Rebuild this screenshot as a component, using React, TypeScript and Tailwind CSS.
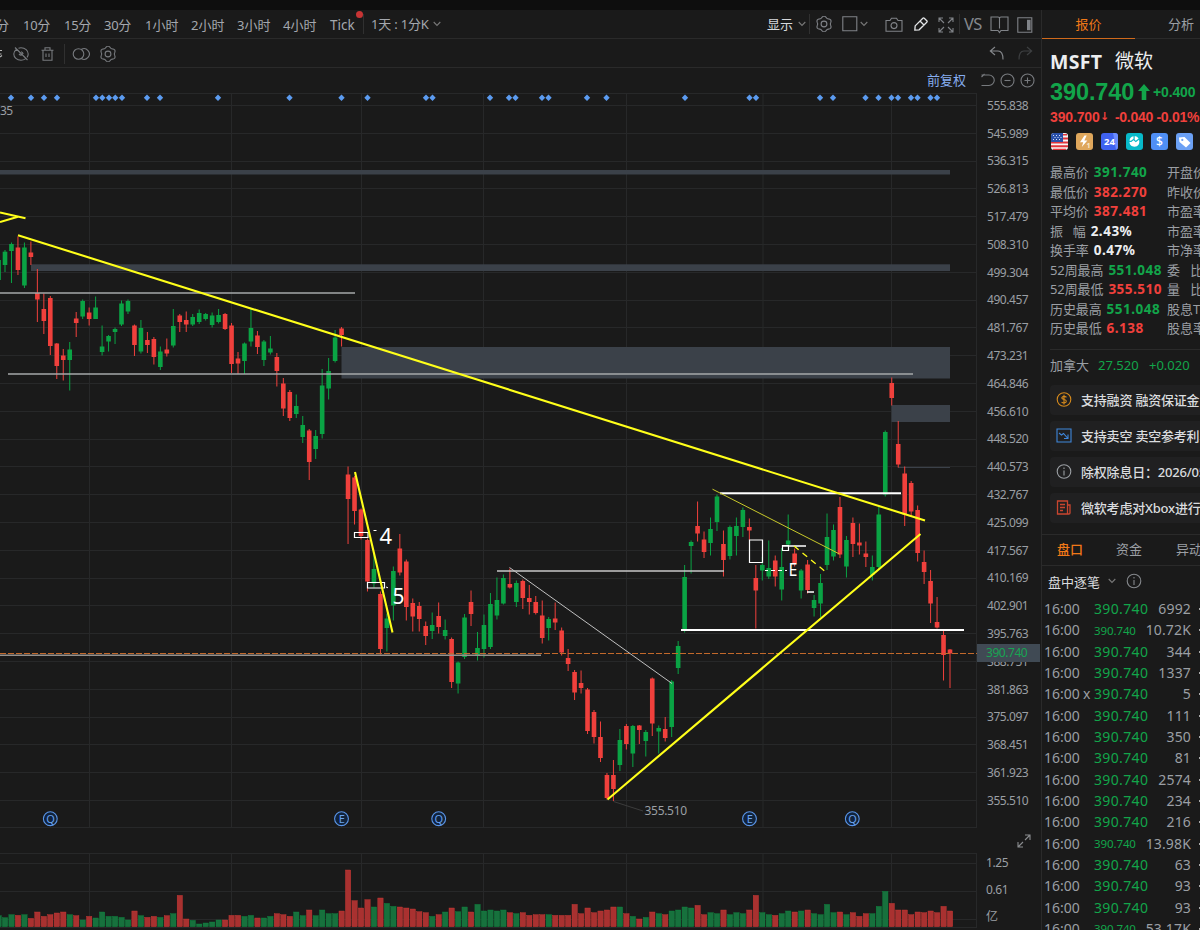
import React from "react";

type Candle = [0 | 1, number, number, number, number, number];

// [rising, body top, body bottom, high, low, volume height]
const CANDLES: Candle[] = [
  [1, 260, 280, 260, 280, 11], [1, 251.7, 265, 250, 272, 9], [1, 244, 251, 242.5, 283, 12], [0, 247.5, 270, 236.5, 275, 11.3],
  [1, 247.5, 285.5, 242.5, 288, 12], [0, 252.5, 257, 241.5, 265, 8.3], [0, 293, 299.5, 269, 322, 14.7], [0, 309, 321, 293.5, 334, 10.3],
  [0, 298, 346, 296, 355, 12], [0, 343.5, 366, 343, 379, 13.7], [0, 355.5, 360, 349, 380.5, 14.7], [1, 349.5, 360, 342, 390.5, 12],
  [0, 318.5, 323, 312, 337, 11], [1, 301, 316.5, 299.5, 319, 6.7], [0, 312.5, 319, 307.5, 325.5, 10.3], [1, 307.5, 319, 296.5, 319, 8.7],
  [1, 346.5, 352, 325.5, 355.5, 14.7], [1, 336, 341.5, 335, 351.5, 10.3], [1, 329, 332, 327.5, 344, 10.3], [1, 303.5, 324.5, 300.5, 326, 9.3],
  [1, 301, 311.5, 299.5, 314, 6.7], [0, 325.5, 345, 324.5, 356, 15.7], [1, 328, 351.5, 320, 353.5, 11], [0, 340, 345, 332, 353, 9.3],
  [0, 339, 357, 337, 364.5, 10.3], [1, 351.5, 367, 346.5, 370, 9.3], [0, 349.5, 353.5, 338.5, 356.5, 11], [1, 326, 345.5, 309, 347.5, 13],
  [0, 315.5, 322, 314, 332, 31.3], [0, 320, 324.5, 311.5, 332, 7.7], [1, 317, 324.5, 314, 326, 6.3], [1, 313, 322, 309.5, 324, 2.7],
  [1, 314, 319, 313, 320.5, 3.7], [1, 315.5, 325, 312.5, 327.5, 4.7], [1, 315, 322, 309, 323.5, 6.7], [0, 314, 329, 313, 330, 6.7],
  [0, 325.5, 364, 323, 373, 11.3], [0, 358.5, 363.5, 352, 374, 11.3], [1, 343.5, 361, 342.5, 374, 10.3], [1, 328, 341.5, 309, 346.5, 11.3],
  [0, 335.5, 347, 331, 354, 8.7], [1, 341.5, 360, 340, 366, 8.7], [1, 348.5, 352.5, 336, 354.5, 10.3], [0, 357, 371, 353, 386.5, 13],
  [0, 383.5, 408.5, 378, 416, 12], [0, 392, 418, 390, 421, 10.3], [1, 406, 414, 394.5, 418, 14.7], [1, 425, 437, 416, 443, 11],
  [0, 430.5, 462, 429, 480, 16.7], [1, 436, 449, 430, 459, 11], [1, 385.5, 434, 369, 438.5, 16.7], [1, 371, 388.5, 358, 399.5, 13],
  [1, 337.5, 361, 330, 362.5, 13], [0, 328.5, 335, 327, 346.5, 15.7], [0, 474.5, 499, 466.5, 544, 56.7], [0, 477.5, 511, 476, 524.5, 26],
  [0, 509.5, 536, 508.5, 539.5, 18.7], [0, 540, 581.5, 538.5, 591.5, 27], [1, 569, 583.5, 553.5, 587.5, 19.7], [0, 594, 649, 591.5, 654.5, 28.7],
  [1, 618.5, 628, 613.5, 651.5, 23.3], [1, 571, 605.5, 566.5, 620.5, 20.3], [0, 548.5, 572.5, 534, 575.5, 19.7], [0, 561.5, 607, 559.5, 620.5, 18.7],
  [0, 603, 616.5, 598.5, 631.5, 17.7], [0, 606, 619, 602, 631.5, 15], [0, 626, 636, 621.5, 645, 14], [1, 625, 631, 612.5, 639, 10.3],
  [0, 616, 627, 602.5, 633.5, 12], [1, 630, 636, 619.5, 639.5, 14.7], [0, 639, 682, 637.5, 688, 18.7], [1, 662.5, 683.5, 661.5, 693.5, 15],
  [1, 617.5, 657, 614, 659, 19.7], [0, 602, 614, 590.5, 626, 14.7], [1, 648, 656, 632, 660.5, 22.3], [1, 625, 649, 614.5, 657.5, 15.7],
  [1, 604, 647, 593, 649, 16.7], [1, 600, 615.5, 577.5, 619.5, 15.7], [1, 578, 603.5, 574.5, 604.5, 16.7], [0, 584, 587.5, 568.5, 588.5, 14],
  [1, 583, 602, 580.5, 607, 13], [0, 581, 598, 579.5, 609, 14], [0, 598, 602, 585, 614.5, 11.3], [0, 602, 613, 596, 614.5, 12],
  [0, 615.5, 638, 600.5, 643.5, 12], [1, 619, 628, 617, 640.5, 12], [0, 618.5, 622.5, 602.5, 630, 11.3], [0, 630.5, 652.5, 627.5, 655.5, 11.3],
  [0, 658, 664, 649, 671, 11.3], [0, 672, 692.5, 670, 700, 22.3], [0, 683, 688, 670.5, 693.5, 13], [0, 689.5, 731, 688, 734, 18.7],
  [0, 712, 737, 710, 743.5, 14], [0, 737, 758, 721.5, 762, 15.7], [0, 775, 798, 773, 799.5, 16.7], [0, 775, 789, 760, 801, 19.7],
  [1, 740, 765, 729, 771, 19.7], [0, 726, 744, 724, 749.5, 13], [1, 726, 753.5, 725, 767, 10.3], [0, 725.5, 730, 725, 744, 7.7],
  [1, 732, 741, 730, 756.5, 9.3], [0, 678.5, 723.5, 677.5, 736, 14.7], [1, 728, 731.5, 725.5, 753.5, 13], [0, 729, 738, 717, 741.5, 12],
  [1, 681.5, 727, 680, 737, 15.7], [1, 646, 668, 641, 674, 16.7], [1, 577, 630, 565, 632.5, 19.7], [1, 542, 546, 540.5, 573.5, 18.7],
  [0, 526, 533.5, 501.5, 541.5, 21.3], [0, 539.5, 552, 531.5, 558, 12], [1, 529, 543, 517.5, 555.5, 14], [1, 496.5, 522, 494.5, 531, 13],
  [0, 544, 560, 530.5, 576.5, 16.7], [1, 527, 556, 525.5, 559.5, 12], [1, 526, 536, 517.5, 555.5, 14], [1, 510, 527, 507.5, 537, 13],
  [0, 527, 530.5, 518.5, 540, 16.7], [0, 578, 590.5, 565, 628.5, 31.3], [1, 565, 570.5, 557, 580.5, 14], [1, 568, 576.5, 540.5, 579, 12],
  [0, 560.5, 576.5, 555.5, 586.5, 11.3], [1, 567, 589.5, 548, 600.5, 13], [1, 540.5, 544.5, 514.5, 545, 15.7], [0, 553.5, 563.5, 548.5, 566.5, 14.7],
  [1, 570.5, 590.5, 569, 598.5, 15.7], [0, 564.5, 590, 560, 593.5, 16.7], [1, 600, 608, 595, 616.5, 13], [1, 583, 603.5, 574, 617, 12],
  [1, 537, 565, 513.5, 570, 22.3], [1, 530, 556.5, 524.5, 560.5, 14], [0, 507, 554.5, 497, 558, 14.7], [1, 540, 566.5, 536, 577.5, 12],
  [0, 523, 544, 517.5, 557, 14], [0, 542.5, 545.5, 523.5, 554.5, 10.3], [0, 553.5, 557, 541.5, 567, 13], [1, 567, 575, 555.5, 580.5, 13],
  [1, 514.5, 567, 507, 569.5, 20.3], [1, 432, 494.5, 430.5, 496.5, 35.3], [0, 383, 398, 377.5, 405.5, 23.3], [0, 444, 464.5, 421, 467.5, 16.7],
  [0, 473.5, 514.5, 466.5, 526, 16.7], [0, 483, 511.5, 481, 516.5, 12], [0, 510, 553, 505.5, 561.5, 14.7], [0, 562, 572, 550.5, 584, 14],
  [0, 581, 603.5, 570, 623, 15.7], [0, 622, 627.5, 597, 628.5, 14], [0, 635, 655, 630.5, 680.5, 20.3], [0, 649.5, 653.5, 649, 688, 15.7],
];

const candleX = (i: number) => 5 + 6.4726 * (i - 1);

const GRID_X = [89.5, 231.5, 361.5, 483.5, 626.5, 763, 891.5];
const PRICES = [
  "555.838", "545.989", "536.315", "526.813", "517.479", "508.310", "499.304", "490.457", "481.767", "473.231", "464.846", "456.610", "448.520",
  "440.573", "432.767", "425.099", "417.567", "410.169", "402.901", "395.763", "388.751", "381.863", "375.097", "368.451", "361.923", "355.510",
];
const EVENTS = [
  11, 31, 44, 57, 96, 102.3, 109, 115.3, 122, 147, 160, 218, 289.5, 341.5, 367.5, 426, 432.5, 490, 509, 515.5, 542, 548.5, 587, 606.5, 685,
  749.5, 756, 820, 833, 865.5, 878.5, 891.5, 898, 911, 917.5, 930.5, 937,
];
const BADGES: [number, string][] = [[50.3, "Q"], [341.5, "E"], [438.7, "Q"], [749.5, "E"], [852.3, "Q"]];

const GEAR =
  Array.from({ length: 72 }, (_, k) => {
    const a = (k * Math.PI) / 36;
    const r = 7.1 - 0.75 * Math.cos(6 * a);
    return `${k ? "L" : "M"}${(8 + r * Math.cos(a)).toFixed(2)} ${(8 + r * Math.sin(a)).toFixed(2)}`;
  }).join("") + "Z";

function Icon({ children, className = "", w = 16, h = 16 }: { children: React.ReactNode; className?: string; w?: number; h?: number }) {
  return (
    <svg width={w} height={h} viewBox={`0 0 ${w} ${h}`} fill="none" stroke="currentColor" strokeWidth={1.1} className={`shrink-0 ${className}`}>
      {children}
    </svg>
  );
}

const Gear = ({ className = "" }) => (
  <Icon className={className}>
    <path d={GEAR} />
    <circle cx="8" cy="8" r="2.9" />
  </Icon>
);

const Chevron = ({ className = "" }) => (
  <Icon w={8} h={6} className={className}>
    <path d="M.7 1 4 4.4 7.3 1" />
  </Icon>
);

const Divider = ({ className = "" }) => <div className={`w-px shrink-0 bg-[#303030] ${className}`} />;

function TopToolbar() {
  return (
    <div className="flex h-[29px] items-center border-b border-[#2a2a2a] text-[13px] whitespace-nowrap text-[#a4a8ae]">
      <div className="flex shrink-0 items-center pt-[3px]">
        <span className="-ml-[4px] w-[27px] shrink-0">分</span>
        <span className="w-[41px] shrink-0 tracking-[-0.3px]">10分</span>
        <span className="w-[40px] shrink-0 tracking-[-0.3px]">15分</span>
        <span className="w-[41px] shrink-0 tracking-[-0.3px]">30分</span>
        <span className="w-[46px] shrink-0">1小时</span>
        <span className="w-[46px] shrink-0">2小时</span>
        <span className="w-[46px] shrink-0">3小时</span>
        <span className="w-[47px] shrink-0">4小时</span>
        <span className="relative w-[33px] shrink-0 text-[13.5px]">
          Tick
          <i className="absolute -top-[8px] left-[26px] size-[7px] rounded-full bg-[#c73434]" />
        </span>
      </div>
      <Divider className="h-[20px]" />
      <span className="ml-[7px] w-[62px] shrink-0 tracking-[-0.2px]">1天 : 1分K</span>
      <Chevron className="text-[#777]" />
      <span className="mt-px ml-[326px] w-[31px] shrink-0 text-[#d6d9dc]">显示</span>
      <Chevron className="text-[#777]" />
      <Divider className="ml-[3px] h-[20px]" />
      <Gear className="ml-[6px] text-[#808388]" />
      <Icon className="ml-[10px] text-[#808388]">
        <path d="M.8 .8h14v14h-14z" />
      </Icon>
      <Chevron className="ml-[2px] text-[#777]" />
      <Icon w={18} className="mt-[2px] ml-[17px] text-[#808388]">
        <path d="M1 3.5h4l1.5-2.3h5L13 3.5h4v10.7H1z" />
        <circle cx="9" cy="8.6" r="3" />
      </Icon>
      <Icon className="mt-[2px] ml-[9px] text-[#e4e6e8]">
        <g strokeWidth="1.3" transform="rotate(45 8 8)">
          <path d="M5.2 12V1.2Q5.2.2 6.2.2h3.600q1 0 1 1V12L8 15.300z M5.200 5.200h5.600" />
        </g>
      </Icon>
      <Icon className="mt-[2px] ml-[10px] text-[#808388]">
        <path d="M1 5V1h4M1 1l5 5M11 1h4v4M15 1l-5 5M1 11v4h4M1 15l5-5M15 11v4h-4M15 15l-5-5" />
      </Icon>
      <Divider className="ml-[5px] h-[20px]" />
      <span className="mt-px ml-[4px] w-[26px] shrink-0 text-[16.5px] tracking-[-0.6px] text-[#85888d]">VS</span>
      <Icon w={19} h={18} className="mt-[2px] text-[#808388]">
        <path d="M1 1h7q1.500 0 1.500 1.500Q9.500 1 11 1h7v13.500h-7L9.500 16.500 8 14.500H1zM9.500 2.500v10" />
      </Icon>
      <Icon className="mt-[2px] ml-[8px] text-[#808388]">
        <path d="M.8 .8h14v14.400h-14z" />
        <path d="M10 2.800h3.600v10.400H10z" fill="currentColor" stroke="none" />
      </Icon>
    </div>
  );
}

function DrawToolbar() {
  return (
    <div className="flex h-[29px] items-center border-b border-[#2a2a2a] pt-px text-[#777a7e]">
      <Icon w={4} h={12} className="text-[#b5b5b5]">
        <path d="M0 2.500h2M0 6h1.500M0 9l2-1.500" />
      </Icon>
      <Icon className="ml-[9px]">
        <path d="M3.600 3.200C1.700 4.600.8 6.500.8 8c0 3.200 3 6.200 7.200 6.200 1.700 0 3.200-.5 4.400-1.300M5.500 2.200C6.300 1.900 7.100 1.800 8 1.800c4.200 0 7.200 3 7.200 6.200 0 1.200-.4 2.400-1.200 3.400M2 1.500l12.500 12.500M6 7.800q2.200 2.800 4-.3Q9.500 6 8 5.700" />
      </Icon>
      <Icon w={13} h={14} className="ml-[12px]">
        <path d="M.5 3.300h12M2 3.500v9.700h9V3.500M4 3.200V.8h5v2.400M5 6.500v3.500M8 6.500v3.500" />
      </Icon>
      <Divider className="ml-[10px] h-[20px]" />
      <Icon w={18} h={14} className="ml-[7px]">
        <circle cx="6.500" cy="7" r="5.300" />
        <path d="M9.200 2.500A5.300 5.300 0 1 1 9.200 11.500" />
      </Icon>
      <Gear className="ml-[10px]" />
      <Icon className="ml-auto text-[#85888c]">
        <path d="M6 1 1.300 5 6 9M1.500 5H9q5 0 5 8.500" />
      </Icon>
      <Icon className="mr-[8px] ml-[12px] text-[#3e4042]">
        <path d="M10 1l4.700 4L10 9M14.500 5H7q-5 0-5 8.500" />
      </Icon>
    </div>
  );
}

function ChartHeader() {
  return (
    <div className="flex h-[24px] items-center justify-end pr-[6px] text-[#777a7e]">
      <span className="mr-[14px] text-[13px] text-[#86adf0]">前复权</span>
      <Icon w={15} h={14}>
        <path d="M4.500 1 1.500 4M1.500 2h7.500a5 5 0 0 1 0 10.500H1.500" />
      </Icon>
      <Icon w={15} h={15} className="ml-[5px]">
        <circle cx="7.500" cy="7.500" r="6.500" />
        <path d="M4.500 7.500h6" />
      </Icon>
      <Icon w={15} h={15} className="ml-[5px]">
        <circle cx="7.500" cy="7.500" r="6.500" />
        <path d="M4.500 7.500h6M7.500 4.500v6" />
      </Icon>
    </div>
  );
}

function PriceChart() {
  return (
    <svg width={977} height={748} viewBox="0 92 977 748" className="shrink-0">
      <g stroke="#272829" strokeWidth="1">
        <path d="M0 93.500H977M0 827.500H977M976.500 93V827" />
        {PRICES.map((p, i) => (
          <path key={p} d={`M0 ${Math.round(105 + i * 27.8) + 0.5}H977`} />
        ))}
        {GRID_X.map((x) => (
          <path key={x} d={`M${x} 94V827`} />
        ))}
      </g>
      <g fill="#3b4149">
        <rect x="0" y="170" width="950" height="4.500" />
        <rect x="31" y="264.300" width="919" height="6.700" />
        <rect x="341.500" y="347" width="608.500" height="31.500" />
        <rect x="891.500" y="405" width="58.500" height="17" />
        <rect x="898" y="467" width="52" height="1" />
      </g>
      <g fill="#5b9bf0">
        {EVENTS.map((x) => (
          <path key={x} d={`M${x} 94.500l3.200 3.200-3.200 3.200-3.200-3.200z`} />
        ))}
      </g>
      {CANDLES.map(([up, top, bottom, high, low], i) => {
        const x = candleX(i);
        return (
          <g key={i} fill={up ? "#0aa344" : "#f0403c"}>
            <rect x={x - 0.5} y={high} width="1" height={low - high} />
            <rect x={x - 2.3} y={top} width="4.600" height={bottom - top} />
          </g>
        );
      })}
      <path d="M0 653.500H977" stroke="#c2692b" strokeDasharray="6 2" strokeWidth="1" />
      <g stroke="#a6a8aa" strokeWidth="1.700" fill="none">
        <path d="M0 293H355" />
        <path d="M8 374H913" />
        <path d="M0 655.200H541" strokeWidth="1.400" stroke="#96928e" />
        <path d="M497 571H724" strokeWidth="1.300" stroke="#c8c8c8" />
        <path d="M509.500 567.500 672 683.500" strokeWidth="1" stroke="#c0c0c0" />
      </g>
      <g stroke="#fff" strokeWidth="2" fill="none">
        <path d="M720 493.300H901M681 630H964" />
        <path d="M782 546H806M807 592H814" strokeWidth="1.600" />
        <path d="M354.500 532.500h13.500v5h-13.500zM367.500 582.500h17v5.500h-17zM749.500 540h13v22.500h-13zM782.500 545.500h6v5h-6z" strokeWidth="1.200" />
        <path d="M373.500 530.500h3M386 587l2 .8M765 570.500h3M771 570.500h4M778 570.500h4M785 570.500h2" strokeWidth="1" />
      </g>
      <g stroke="#ffff1a" fill="none" strokeWidth="2.100">
        <path d="M18 235.200 925 520.500M607.500 799.500 920.500 534M355 472l37.500 160.500" />
        <path d="M0 212.500 25.500 218.200M0 222 18 216.800" />
        <path d="M712.500 489.200 839.500 554" strokeWidth="1" stroke="#c9c92a" />
        <path d="M794 546 826.500 572.500" strokeWidth="1.300" strokeDasharray="6 5" />
      </g>
      <path d="M613.500 801.500 643 811" stroke="#3c3c3c" strokeWidth="1" />
      <g fill="#fff">
        <text x="379.500" y="544" fontSize="22">4</text>
        <text x="392.500" y="603.500" fontSize="21">5</text>
        <text x="788.500" y="575.700" fontSize="18" textLength="8.500" lengthAdjust="spacingAndGlyphs">E</text>
      </g>
      <g fill="#9b9fa4" fontSize="12">
        <text x="644.500" y="815" letterSpacing="-0.300">355.510</text>
        <text x="0" y="115" letterSpacing="-0.500">35</text>
      </g>
      {BADGES.map(([x, t]) => (
        <g key={x}>
          <circle cx={x} cy="818.700" r="6.900" fill="#10233c" stroke="#5a95e8" strokeWidth="1.100" />
          <text x={x} y="822.700" fontSize="11" fill="#6aa2ee" textAnchor="middle">{t}</text>
        </g>
      ))}
    </svg>
  );
}

function VolumeChart() {
  return (
    <svg width={977} height={90} viewBox="0 840 977 90" className="shrink-0">
      <path
        stroke="#272829"
        d={"M0 853.500H977M0 863.500H977M0 891.500H977M0 919.500H977M0 927.500H977M976.500 854V927" + GRID_X.map((x) => `M${x} 854V927`).join("")}
      />
      {CANDLES.map(([up, , , , , v], i) => (
        <rect key={i} x={candleX(i) - 2.6} y={926.7 - v} width="5.300" height={v} fill={up ? "#17713d" : "#a93130"} stroke={up ? "#0b8a40" : "#cf3a36"} strokeWidth=".4" />
      ))}
    </svg>
  );
}

function ChartPane() {
  return (
    <main className="flex w-[1041px] shrink-0 flex-col">
      <TopToolbar />
      <DrawToolbar />
      <ChartHeader />
      <div className="flex h-[748px] text-[12px] tracking-[-0.45px] text-[#9b9fa4]">
        <PriceChart />
        <div className="relative w-[64px] shrink-0">
          {PRICES.map((p) => (
            <div key={p} className="flex h-[27.8px] items-center pl-[10px]">{p}</div>
          ))}
          <div className="absolute top-[552px] left-0 flex h-[18px] w-[63px] items-center bg-[#404a54] pl-[9px] text-[#18a453]">390.740</div>
          <Icon w={14} h={14} className="absolute top-[742px] left-[40px] text-[#8b8d90]">
            <path d="M8 1h5v5M13 1 8 6M1 8v5h5M1 13l5-5" />
          </Icon>
        </div>
      </div>
      <div className="flex h-[90px] text-[12px] tracking-[-0.4px] text-[#9b9fa4]">
        <VolumeChart />
        <div className="flex flex-col pt-[9px] pl-[9px]">
          <div className="flex h-[28px] items-center">1.25</div>
          <div className="flex h-[28px] items-center">0.61</div>
          <div className="flex h-[28px] items-center">亿</div>
        </div>
      </div>
    </main>
  );
}

const G = "text-[#12a54a]";
const R = "text-[#f0403c]";
const W = "text-[#eceef0]";
const STATS: [string, string, string, string][] = [
  ["最高价", "391.740", G, "开盘价"],
  ["最低价", "382.270", R, "昨收价"],
  ["平均价", "387.481", R, "市盈率"],
  ["振   幅", "2.43%", W, "市盈率"],
  ["换手率", "0.47%", W, "市净率"],
  ["52周最高", "551.048", G, "委   比"],
  ["52周最低", "355.510", R, "量   比"],
  ["历史最高", "551.048", G, "股息TTM"],
  ["历史最低", "6.138", R, "股息率"],
];

const TRADES: [string, string][] = [
  ["6992", ""], ["10.72K", "s"], ["344", ""], ["1337", ""], ["5", "x"], ["111", ""], ["350", ""], ["81", ""],
  ["2574", ""], ["234", ""], ["216", ""], ["13.98K", "s"], ["63", ""], ["93", ""], ["93", ""], ["53.17K", "s"],
];

function Tags() {
  return (
    <div className="mt-[5px] flex h-[17px] shrink-0 gap-[8px] pl-[9px]">
      <Icon w={17} h={17}>
        <g stroke="none">
          <rect width="17" height="17" rx="3" fill="#f4f4f4" />
          <path d="M1 1h15v1.600H1zM0 4.500h17v2H0zM0 8.500h17v2H0zM0 12.300h17v2H0zM2 15.800h13V17H2z" fill="#e0343c" />
          <path d="M0 3a3 3 0 0 1 3-3h9v9H0z" fill="#2a50a8" />
          <path d="M2 2h1v1H2zM5 2h1v1H5zM8 2h1v1H8zM3.500 4h1v1h-1zM6.500 4h1v1h-1zM9.500 4h1v1h-1zM2 6h1v1H2zM5 6h1v1H5zM8 6h1v1H8z" fill="#d4def8" />
        </g>
      </Icon>
      <Icon w={17} h={17}>
        <g stroke="none">
          <rect width="17" height="17" rx="3" fill="#dfa75c" />
          <path d="M8.500 2.500 4 9.300h3.200L5.800 14l5.600-6.500H8.300l2.400-5z" fill="#fff" />
          <text x="10.500" y="14.500" fontSize="7" fontWeight="700" fill="#fbe7c8">1</text>
        </g>
      </Icon>
      <Icon w={17} h={17}>
        <g stroke="none">
          <rect width="17" height="17" rx="3" fill="#3f62f0" />
          <path d="M12 0h2a3 3 0 0 1 3 3v11a3 3 0 0 1-2 2.800z" fill="#6b8cff" />
          <text x="8.500" y="12" fontSize="9.500" fontWeight="700" fill="#fff" textAnchor="middle">24</text>
        </g>
      </Icon>
      <Icon w={17} h={17}>
        <g stroke="none">
          <rect width="17" height="17" rx="3" fill="#08b9c9" />
          <path d="M3.500 9h1.800L7.500 7.200l2.300 2L13 6.700c1.200 3.800-1 7-4.500 7-3 0-5-2-5-4.700zM3.500 7.800a5 5 0 0 1 4-4.600v2.600L5 7.800zM8.700 3a4.800 4.800 0 0 1 3.900 2.600L9.800 7.800 8.700 6.700z" fill="#fff" />
        </g>
      </Icon>
      <Icon w={17} h={17}>
        <g stroke="none">
          <rect width="17" height="17" rx="3" fill="#4f8ff5" />
          <text x="8.500" y="13" fontSize="12" fontWeight="500" fill="#fff" textAnchor="middle">$</text>
        </g>
      </Icon>
      <Icon w={17} h={17}>
        <g stroke="none">
          <rect width="17" height="17" rx="3" fill="#6ba0f4" />
          <path d="M3 4.500 8.500 4l6 6-4.500 4.500L3.500 9z" fill="#fff" />
          <circle cx="6.300" cy="6.900" r="1.100" fill="#6ba0f4" />
        </g>
      </Icon>
    </div>
  );
}

function Notice({ icon, text }: { icon: React.ReactNode; text: string }) {
  return (
    <div className="flex h-[30px] shrink-0 items-center rounded-l bg-[#202021] pl-[6px] text-[13px] font-medium text-[#dadcdf]">
      {icon}
      <span className="mt-px ml-[9px] tracking-[-0.2px]">{text}</span>
    </div>
  );
}

function QuotePane() {
  return (
    <aside className="flex w-[159px] shrink-0 flex-col overflow-hidden border-l border-[#2a2a2a] whitespace-pre">
      <div className="flex h-[29px] shrink-0 border-b border-[#2a2a2a] text-[13px]">
        <div className="-mb-px flex w-[93px] shrink-0 items-center justify-center border-b border-[#d06a1c] pt-px text-[#f07818]">报价</div>
        <div className="flex shrink-0 items-center pt-px pl-[33px] text-[#9b9fa4]">分析</div>
      </div>
      <div className="flex h-[40px] shrink-0 items-center pt-[5px] pl-[8px] text-[19px] text-[#eceef0]">
        <b className="w-[65px] shrink-0 text-[19.500px] font-bold tracking-[0.3px]">MSFT</b>
        <span>微软</span>
      </div>
      <div className={`flex h-[26px] shrink-0 items-center pl-[8px] font-["Liberation_Sans",sans-serif] font-bold ${G}`}>
        <span className="mt-[2px] w-[88px] shrink-0 text-[23.500px] tracking-[-0.1px]">390.740</span>
        <Icon w={12} h={16}>
          <path d="M6 0 12 7H8.300V16H3.700V7H0z" fill="currentColor" stroke="none" />
        </Icon>
        <span className="ml-[3px] text-[14px] tracking-[-0.15px]">+0.400  +0.10%</span>
      </div>
      <div className={`flex h-[23px] shrink-0 items-center pl-[8px] font-["Liberation_Sans",sans-serif] text-[14px] font-bold ${R}`}>
        <span className="w-[50px] shrink-0 tracking-[-0.15px]">390.700</span>
        <span className="w-[15px] shrink-0 font-['DejaVu_Sans'] text-[11px]">↓</span>
        <span className="tracking-[-0.3px]">-0.040 -0.01%</span>
      </div>
      <Tags />
      <div className="mt-[13px] shrink-0 pl-[8px] text-[13px] text-[#9b9fa4]">
        {STATS.map(([k, v, c, k2]) => (
          <div key={k} className="flex h-[19.500px] items-center">
            <div className="flex w-[117px] shrink-0 items-center">
              <span className="tracking-[-0.1px]">{k}</span>
              <b className={`ml-[5px] text-[13.500px] tracking-[0.5px] ${c}`}>{v}</b>
            </div>
            <span>{k2}</span>
          </div>
        ))}
      </div>
      <div className="mt-[10px] ml-[8px] flex h-[32px] shrink-0 items-center border-t border-[#2a2a2a] text-[13px] text-[#9b9fa4]">
        <span className="w-[48px] shrink-0">加拿大</span>
        <span className={`w-[51px] shrink-0 ${G}`}>27.520</span>
        <span className={G}>+0.020   +0.07%</span>
      </div>
      <div className="mt-[4px] ml-[8px] flex shrink-0 flex-col gap-[6px]">
        <Notice
          text="支持融资 融资保证金"
          icon={
            <Icon className="text-[#d68a1c]">
              <circle cx="8" cy="7.500" r="6.800" />
              <path d="M10.500 5.300Q8 3.500 6 5.300 5.300 7 8 7.500q3 .7 2 2.600-2 1.700-4.500 0M8 2.700v9.800" />
            </Icon>
          }
        />
        <Notice
          text="支持卖空 卖空参考利率"
          icon={
            <Icon className="text-[#3f87dc]">
              <path d="M1 1h14v13H1zM3 5l2.500 2 2-1.500 4 4.500M12 6.500v4H8" />
            </Icon>
          }
        />
        <Notice
          text="除权除息日：2026/05"
          icon={
            <Icon className="text-[#9b9fa4]">
              <circle cx="8" cy="7.500" r="6.800" />
              <path d="M8 6.500v5M8 3.500v1.500" />
            </Icon>
          }
        />
        <Notice
          text="微软考虑对Xbox进行"
          icon={
            <Icon className="text-[#c9452f]">
              <path d="M1.500 1h10v13h-10zM11.500 5H14v8q0 1-1.200 1h-2M4 4.500h5M4 7.500h5M4 10.500h3" strokeWidth="1.300" />
            </Icon>
          }
        />
      </div>
      <div className="mt-[11px] flex h-[32px] shrink-0 items-center border-y border-[#2a2a2a] pl-[15px] text-[13px] text-[#9b9fa4]">
        <span className="w-[59px] shrink-0 font-medium text-[#f07818]">盘口</span>
        <span className="w-[60px] shrink-0">资金</span>
        <span>异动</span>
      </div>
      <div className="flex h-[33px] shrink-0 items-center pl-[6px] text-[13px] text-[#dadcdf]">
        <span className="w-[60px] shrink-0">盘中逐笔</span>
        <Chevron className="-mt-[2px] text-[#777]" />
        <Icon className="-mt-[2px] ml-[10px] text-[#85888c]">
          <circle cx="8" cy="8" r="6.800" />
          <path d="M8 7v5M8 4v1.500" />
        </Icon>
      </div>
      <div className="text-[14px] text-[#9b9fa4]">
        {TRADES.map(([n, t], i) => (
          <div key={i} className="flex h-[21.330px] items-center pl-[2px]">
            <span className="w-[39px] shrink-0">16:00</span>
            <span className="w-[11px] shrink-0">{t === "x" ? "x" : ""}</span>
            <span className={`w-[50px] shrink-0 ${G} ${t === "s" ? "text-[11.500px] tracking-[-0.1px]" : "tracking-[0.35px]"}`}>390.740</span>
            <span className="ml-[-4px] w-[51px] shrink-0 text-right tracking-[0.15px]">{n}</span>
            <i className="ml-[8px] h-[2px] w-[2px] shrink-0 bg-[#aaa]" />
          </div>
        ))}
      </div>
    </aside>
  );
}

export default function App() {
  return (
    <div className="flex h-[930px] w-[1200px] flex-col overflow-hidden bg-[#1a1a1a] font-['Noto_Sans','Noto_Sans_CJK_SC',sans-serif] leading-none">
      <div className="h-[10px] shrink-0 bg-[#0e0e0e]" />
      <div className="flex h-[920px]">
        <ChartPane />
        <QuotePane />
      </div>
    </div>
  );
}
